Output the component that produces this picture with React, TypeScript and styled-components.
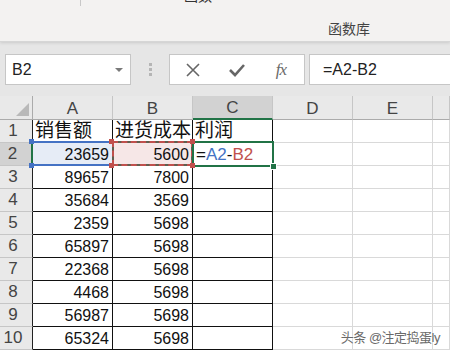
import React from 'react';
import styled, { createGlobalStyle, css } from 'styled-components';

const GlobalStyle = createGlobalStyle`
  html, body {
    margin: 0;
    padding: 0;
    background: #ffffff;
    overflow: hidden;
  }
  body {
    font-family: "Liberation Sans", "Noto Sans CJK SC", sans-serif;
  }
`;

const Page = styled.div`
  width: 450px;
  height: 350px;
  position: relative;
  overflow: hidden;
  display: flex;
  flex-direction: column;
`;

/* ---------- ribbon ---------- */
const Ribbon = styled.div`
  height: 41px;
  flex: none;
  background: #f3f2f1;
  border-bottom: 1px solid #d6d6d6;
  box-shadow: 0 1px 3px rgba(0, 0, 0, 0.12);
  display: flex;
  position: relative;
  z-index: 2;
`;

const RibbonGroup = styled.div<{ $w: number; $sep?: boolean }>`
  width: ${(p) => p.$w}px;
  flex: none;
  display: flex;
  flex-direction: column;
  align-items: center;
  ${(p) =>
    p.$sep &&
    css`
      border-right: 1px solid #c8c8c8;
      height: 6px;
    `}
`;

const CutLabel = styled.span`
  font-size: 14px;
  color: #333;
  margin-top: -12px;
  line-height: 16px;
`;

const GroupTitle = styled.span`
  font-size: 14px;
  color: #444;
  margin-top: 20px;
  line-height: 18px;
`;

/* ---------- formula bar ---------- */
const FormulaBar = styled.div`
  height: 54px;
  flex: none;
  background: #e6e6e6;
  display: flex;
  align-items: flex-start;
  padding: 12px 0 0 5px;
  box-sizing: border-box;
`;

const NameBox = styled.div`
  width: 126px;
  height: 31px;
  box-sizing: border-box;
  background: #fff;
  border: 1px solid #c6c6c6;
  display: flex;
  align-items: center;
  justify-content: space-between;
  padding: 0 6px 0 6px;
  font-size: 16px;
  color: #222;
`;

const Caret = styled.span`
  width: 0;
  height: 0;
  border-left: 4px solid transparent;
  border-right: 4px solid transparent;
  border-top: 4px solid #7a7a7a;
  margin-right: 1px;
`;

const Dots = styled.div`
  width: 38px;
  height: 31px;
  display: flex;
  flex-direction: column;
  align-items: center;
  justify-content: center;
  gap: 2px;
  span {
    width: 3px;
    height: 3px;
    background: #b5b5b5;
  }
`;

const ButtonBox = styled.div`
  width: 136px;
  height: 31px;
  box-sizing: border-box;
  background: #fff;
  border: 1px solid #c6c6c6;
  display: flex;
  align-items: center;
  padding-left: 12px;
  gap: 22px;
`;

const IconButton = styled.span`
  width: 22px;
  height: 22px;
  display: flex;
  align-items: center;
  justify-content: center;
  color: #6a6a6a;
`;

const Fx = styled.span`
  font-family: "Liberation Serif", serif;
  font-style: italic;
  font-size: 17px;
  color: #6a6a6a;
  letter-spacing: -1px;
`;

const FormulaInput = styled.div`
  flex: 1;
  height: 31px;
  box-sizing: border-box;
  margin-left: 4px;
  background: #fff;
  border: 1px solid #c6c6c6;
  border-right: none;
  display: flex;
  align-items: center;
  padding-left: 13px;
  font-size: 16px;
  color: #222;
`;

/* ---------- sheet ---------- */
const Sheet = styled.div`
  flex: 1;
  display: grid;
  grid-template-columns: 33px repeat(5, 80px) 1fr;
  grid-template-rows: 24px;
  grid-auto-rows: 23px;
  background: #fff;
`;

const Corner = styled.div`
  background: #e9e9e9;
  border-right: 1px solid #ababab;
  border-bottom: 1px solid #ababab;
  box-sizing: border-box;
  position: relative;
  &::after {
    content: '';
    position: absolute;
    right: 3px;
    bottom: 3px;
    width: 0;
    height: 0;
    border-left: 13px solid transparent;
    border-bottom: 13px solid #b9b9b9;
  }
`;

const ColHead = styled.div<{ $active?: boolean }>`
  box-sizing: border-box;
  background: ${(p) => (p.$active ? '#d2d2d2' : '#e9e9e9')};
  border-right: 1px solid #c6c6c6;
  border-bottom: ${(p) => (p.$active ? '2px solid #217346' : '1px solid #ababab')};
  display: flex;
  align-items: center;
  justify-content: center;
  font-size: 17px;
  color: #444;
  padding-top: 2px;
`;

const RowHead = styled.div<{ $active?: boolean }>`
  box-sizing: border-box;
  background: ${(p) => (p.$active ? '#d2d2d2' : '#e9e9e9')};
  border-bottom: 1px solid #c6c6c6;
  border-right: ${(p) => (p.$active ? '2px solid #217346' : '1px solid #222')};
  display: flex;
  align-items: center;
  justify-content: center;
  padding-right: 6px;
  font-size: 17px;
  color: #444;
`;

type Mark = 'blue' | 'red' | 'sel';

const Cell = styled.div<{ $boxed?: boolean; $cjk?: boolean; $right?: boolean; $mark?: Mark }>`
  box-sizing: border-box;
  position: relative;
  border-right: 1px solid ${(p) => (p.$boxed ? '#111' : '#d9d9d9')};
  border-bottom: 1px solid ${(p) => (p.$boxed ? '#111' : '#d9d9d9')};
  display: flex;
  align-items: ${(p) => (p.$cjk ? 'flex-end' : 'center')};
  justify-content: ${(p) => (p.$right ? 'flex-end' : 'flex-start')};
  padding: ${(p) => (p.$cjk ? '0 2px 0 2px' : '2px 3px 0 3px')};
  font-size: ${(p) => (p.$cjk ? '19px' : '16px')};
  line-height: ${(p) => (p.$cjk ? '22px' : '20px')};
  color: #111;
  white-space: nowrap;
  ${(p) =>
    p.$mark === 'blue' &&
    css`
      background: #e6ecf6;
      &::after {
        content: '';
        position: absolute;
        inset: -2px -1px -1px -2px;
        border-top: 2px solid #4472c4;
        border-bottom: 2px solid #4472c4;
        pointer-events: none;
      }
    `}
  ${(p) =>
    p.$mark === 'red' &&
    css`
      background: #f6e7e7;
      &::before {
        content: '';
        position: absolute;
        inset: -2px -1px -1px -1px;
        border: 2px solid #5f5f4f;
        pointer-events: none;
      }
      &::after {
        content: '';
        position: absolute;
        inset: -2px -1px -1px -1px;
        border: 2px dashed #c0504d;
        pointer-events: none;
      }
    `}
  ${(p) =>
    p.$mark === 'sel' &&
    css`
      &::after {
        content: '';
        position: absolute;
        inset: -2px -2px -2px -1px;
        border: 2px solid #217346;
        pointer-events: none;
      }
    `}
`;

const Knob = styled.span<{ $color: string; $x: 'l' | 'r'; $y: 't' | 'b' }>`
  position: absolute;
  width: 5px;
  height: 5px;
  background: ${(p) => p.$color};
  z-index: 3;
  ${(p) => (p.$x === 'l' ? 'left: -4px;' : 'right: -3px;')}
  ${(p) => (p.$y === 't' ? 'top: -4px;' : 'bottom: -3px;')}
`;

const FillHandle = styled.span`
  position: absolute;
  right: -5px;
  bottom: -5px;
  width: 5px;
  height: 5px;
  background: #217346;
  border: 1px solid #fff;
  z-index: 3;
`;

const Ref = styled.span<{ $c: string }>`
  color: ${(p) => p.$c};
`;

const Watermark = styled.div`
  position: absolute;
  right: 10px;
  bottom: 4px;
  font-size: 13px;
  color: #6a6a6a;
  text-shadow: 0 0 2px #fff, 0 0 2px #fff;
  letter-spacing: -0.5px;
`;

const rows: [number, number][] = [
  [23659, 5600],
  [89657, 7800],
  [35684, 3569],
  [2359, 5698],
  [65897, 5698],
  [22368, 5698],
  [4468, 5698],
  [56987, 5698],
  [65324, 5698],
];

const cols = ['A', 'B', 'C', 'D', 'E', ''];

const XIcon = () => (
  <svg width="16" height="16" viewBox="0 0 16 16">
    <path d="M2 2 L14 14 M14 2 L2 14" stroke="#666" strokeWidth="1.6" fill="none" />
  </svg>
);

const CheckIcon = () => (
  <svg width="18" height="16" viewBox="0 0 18 16">
    <path d="M2 8 L7 13 L16 3" stroke="#666" strokeWidth="2.6" fill="none" strokeLinejoin="miter" />
  </svg>
);

export default function App() {
  return (
    <Page>
      <GlobalStyle />
      <Ribbon>
        <RibbonGroup $w={80} $sep />
        <RibbonGroup $w={102} />
        <RibbonGroup $w={30}>
          <CutLabel>函数</CutLabel>
        </RibbonGroup>
        <RibbonGroup $w={111} />
        <RibbonGroup $w={50}>
          <GroupTitle>函数库</GroupTitle>
        </RibbonGroup>
      </Ribbon>

      <FormulaBar>
        <NameBox>
          B2
          <Caret />
        </NameBox>
        <Dots>
          <span />
          <span />
          <span />
        </Dots>
        <ButtonBox>
          <IconButton>
            <XIcon />
          </IconButton>
          <IconButton>
            <CheckIcon />
          </IconButton>
          <IconButton>
            <Fx>fx</Fx>
          </IconButton>
        </ButtonBox>
        <FormulaInput>=A2-B2</FormulaInput>
      </FormulaBar>

      <Sheet>
        <Corner />
        {cols.map((c) => (
          <ColHead key={c || 'f'} $active={c === 'C'}>
            {c}
          </ColHead>
        ))}

        <RowHead>1</RowHead>
        <Cell $boxed $cjk>销售额</Cell>
        <Cell $boxed $cjk>进货成本</Cell>
        <Cell $boxed $cjk>利润</Cell>
        <Cell />
        <Cell />
        <Cell />

        {rows.map(([a, b], i) => {
          const n = i + 2;
          const first = n === 2;
          return (
            <React.Fragment key={n}>
              <RowHead $active={first}>{n}</RowHead>
              <Cell $boxed $right $mark={first ? 'blue' : undefined}>
                {a}
                {first && <Knob $color="#4472c4" $x="l" $y="t" />}
                {first && <Knob $color="#4472c4" $x="l" $y="b" />}
              </Cell>
              <Cell $boxed $right $mark={first ? 'red' : undefined}>
                {b}
                {first && <Knob $color="#c0504d" $x="l" $y="t" />}
                {first && <Knob $color="#c0504d" $x="l" $y="b" />}
                {first && <Knob $color="#c0504d" $x="r" $y="t" />}
                {first && <Knob $color="#c0504d" $x="r" $y="b" />}
              </Cell>
              <Cell $boxed $mark={first ? 'sel' : undefined} style={first ? { fontSize: 17 } : undefined}>
                {first && (
                  <>
                    =<Ref $c="#4472c4">A2</Ref>-<Ref $c="#c0504d">B2</Ref>
                    <FillHandle />
                  </>
                )}
              </Cell>
              <Cell />
              <Cell />
              <Cell />
            </React.Fragment>
          );
        })}
      </Sheet>

      <Watermark>头条 @注定捣蛋ly</Watermark>
    </Page>
  );
}
